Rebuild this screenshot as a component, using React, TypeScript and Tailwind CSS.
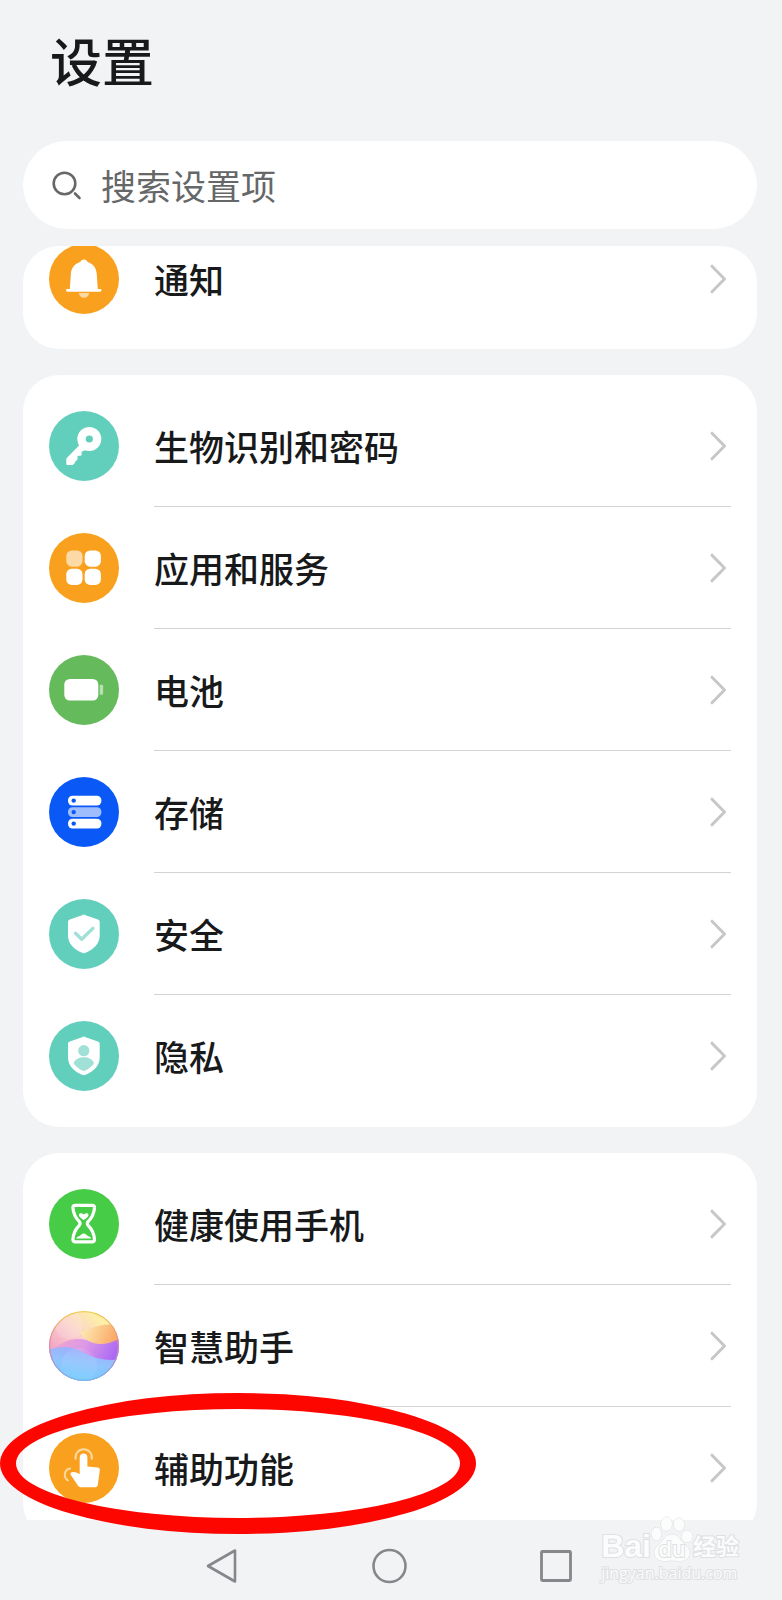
import type { ReactNode } from 'react'

type Item = {
  label: string
  icon: ReactNode
}

function Badge({ color, children }: { color: string; children: ReactNode }) {
  return (
    <svg viewBox="0 0 70 70" className="size-[70px] shrink-0" aria-hidden="true">
      <circle cx="35" cy="35" r="35" fill={color} />
      {children}
    </svg>
  )
}

const SHIELD =
  'M34.8 15.6c.7 0 1.2.3 1.8.6l12.3 4.4c1.2.4 1.8 1.2 1.8 2.4v13.5c0 8.5-6.4 14-13.6 17.1-1.6.7-3 .7-4.6 0C25.4 50.5 19 45 19 36.5V23c0-1.2.6-2 1.8-2.4l12.2-4.4c.6-.3 1.1-.6 1.8-.6z'

const bell = (
  <Badge color="#f9a11f">
    <path
      d="M35 15.6c1.8 0 3 1 3.5 2.3 5.5 1.6 8.7 5.8 9.2 11.6l1.1 15.5h2.4c.8 0 1.2.5 1.2 1.2v.4c0 .7-.4 1.1-1.2 1.1H18.3c-.8 0-1.2-.4-1.2-1.1v-.4c0-.7.4-1.2 1.2-1.2h2.5l1.1-15.5c.5-5.8 3.9-10 9.4-11.6.5-1.3 1.9-2.3 3.7-2.3z"
      fill="#fff"
    />
    <path d="M29.8 49h10.4c-.4 3-2.5 4.8-5.2 4.8S30.2 52 29.8 49z" fill="#fcd9a0" />
  </Badge>
)

const keyIcon = (
  <Badge color="#62cfbd">
    <circle cx="40.3" cy="28" r="7.8" fill="none" stroke="#fff" strokeWidth="8.4" />
    <path
      d="M31 33.5l5.8 5.5-3.2 1.2c-1.2.5-1.1 1.4-.9 2.5.2 1.5-.7 2.3-2.3 2.1-1.7-.1-2.3.8-1.9 2.2.4 1.6-.3 2.3-1.5 2.8-.8.4-.6 1.300-1.200 2.100l-1.600 1.600c-.4.4-.8.5-1.300.5h-4.300c-.8 0-1.300-.5-1.300-1.300v-4.400c0-.5.2-.9.5-1.200z"
      fill="#fff"
    />
  </Badge>
)

const apps = (
  <Badge color="#f9a11f">
    <rect x="17.3" y="17.5" width="16.2" height="16.2" rx="5.5" fill="#fcd9a5" />
    <rect x="35.7" y="17.5" width="16.2" height="16.2" rx="5.5" fill="#fff" />
    <rect x="17.3" y="35.7" width="16.2" height="16.2" rx="5.5" fill="#fff" />
    <rect x="35.7" y="35.7" width="16.2" height="16.2" rx="5.5" fill="#fff" />
  </Badge>
)

const battery = (
  <Badge color="#65bb5c">
    <rect x="15.3" y="24" width="34" height="21.6" rx="5.5" fill="#fff" />
    <rect x="50.7" y="29.8" width="3.4" height="10" rx="1.2" fill="#b9dfb5" />
  </Badge>
)

const storage = (
  <Badge color="#0a59f7">
    <rect x="19" y="18.7" width="33.4" height="9.8" rx="4.5" fill="#fff" />
    <rect x="19" y="30.2" width="33.4" height="9.8" rx="4.5" fill="#9dbdfc" />
    <rect x="19" y="41.7" width="33.4" height="9.8" rx="4.5" fill="#fff" />
    <g fill="#0a59f7">
      <circle cx="24.7" cy="23.6" r="2.2" />
      <circle cx="24.7" cy="35.1" r="2.2" />
      <circle cx="24.7" cy="46.6" r="2.2" />
    </g>
  </Badge>
)

const security = (
  <Badge color="#62cfbd">
    <path d={SHIELD} fill="#fff" />
    <path
      d="M26.5 34.2l6.2 6 11.2-10.8"
      fill="none"
      stroke="#a0e0d6"
      strokeWidth="3.4"
      strokeLinecap="round"
      strokeLinejoin="round"
    />
  </Badge>
)

const privacy = (
  <Badge color="#62cfbd">
    <path d={SHIELD} fill="#fff" />
    <circle cx="34.8" cy="29.7" r="5.6" fill="#a0e0d6" />
    <path
      d="M34.8 36.2c4.8 0 8.6 2 9.9 5.2.3.7.1 1.2-.4 1.8-2.1 2.6-5 4.9-8.1 6.4-1 .5-1.8.5-2.8 0-3.1-1.5-6-3.8-8.1-6.4-.5-.6-.7-1.1-.4-1.8 1.3-3.2 5.1-5.2 9.9-5.2z"
      fill="#a0e0d6"
    />
  </Badge>
)

const hourglass = (
  <Badge color="#47cc47">
    <path
      d="M26.2 16.3h17c1.5 0 2.4.9 2.3 2.3-.4 5.7-2.4 10-6.4 14-1 1.2-1 2.5 0 3.7 4 4 6 8.3 6.4 14 .1 1.5-.8 2.6-2.3 2.6h-17c-1.5 0-2.4-1.1-2.3-2.6.4-5.7 2.4-10 6.4-14 1-1.2 1-2.5 0-3.7-4-4-6-8.3-6.4-14-.1-1.4.8-2.3 2.3-2.3z"
      fill="none"
      stroke="#fff"
      strokeWidth="3.2"
    />
    <path d="M34.7 31c-2-1.4-4.8-3-4.8-5 0-2.2 3-2.2 4.8-.6 1.8-1.600 4.800-1.600 4.800.6 0 2-2.800 3.600-4.800 5z" fill="#fff" />
    <path d="M34.7 44.5c2 0 2.7 2 4.8 2.7 1.5.5 2.5 1.2 2.7 2.3H27.2c.2-1.100 1.200-1.800 2.700-2.300 2.100-.7 2.800-2.700 4.800-2.700z" fill="#fff" />
  </Badge>
)

const assistant = (
  <svg viewBox="0 0 70 70" className="size-[70px] shrink-0" aria-hidden="true">
    <defs>
      <clipPath id="orb">
        <circle cx="35" cy="35" r="35" />
      </clipPath>
      <linearGradient id="orbSky" x1="0.1" y1="0.55" x2="0.6" y2="0">
        <stop offset="0" stopColor="#f3a9c6" />
        <stop offset="0.5" stopColor="#fbd0cb" />
        <stop offset="1" stopColor="#fdf0a6" />
      </linearGradient>
      <linearGradient id="orbSun" x1="0" y1="0" x2="1" y2="0.2">
        <stop offset="0" stopColor="#fdf0b8" />
        <stop offset="1" stopColor="#faa968" />
      </linearGradient>
      <linearGradient id="orbWave" x1="0" y1="0" x2="1" y2="0.3">
        <stop offset="0" stopColor="#f3a5c8" />
        <stop offset="0.5" stopColor="#dc9ae6" />
        <stop offset="1" stopColor="#a866f6" />
      </linearGradient>
      <linearGradient id="orbSea" x1="0.7" y1="0" x2="0.4" y2="1">
        <stop offset="0" stopColor="#a3aafc" />
        <stop offset="0.5" stopColor="#90c4fd" />
        <stop offset="1" stopColor="#70cbfd" />
      </linearGradient>
      <linearGradient id="orbRim" x1="0" y1="0" x2="0" y2="1">
        <stop offset="0" stopColor="#f1ce52" />
        <stop offset="0.5" stopColor="#dd83a4" />
        <stop offset="1" stopColor="#74b5ef" />
      </linearGradient>
    </defs>
    <g clipPath="url(#orb)">
      <rect width="70" height="70" fill="url(#orbSky)" />
      <circle cx="20" cy="14" r="14" fill="#fff" opacity="0.15" />
      <path d="M0 40c8-3 14-12 30-12 10 0 14 6 40 0v42H0z" fill="url(#orbWave)" />
      <path d="M31 21c6-1 12-5 20-6.5 7-1.5 13-1.5 19 0V28c-6 3-12 5-19 5-9 0-16-5-20-12z" fill="url(#orbSun)" />
      <path d="M0 38.5c8-2.5 17-3.5 24-1.5 9 2.5 15 8 24 10 7 1.8 14 2.5 22 1.5V70H0z" fill="url(#orbSea)" />
      <circle cx="30" cy="55" r="18" fill="#fff" opacity="0.08" />
    </g>
    <circle cx="35" cy="35" r="34.4" fill="none" stroke="url(#orbRim)" strokeWidth="1.2" />
  </svg>
)

const touch = (
  <Badge color="#f9a11f">
    <path
      d="M34.6 20.6c2.2 0 3.8 1.6 3.8 3.8v9l10.2 1.2c1.6.2 2.4 1.2 2.2 2.8l-2 14.4c-.2 1.6-1.1 2.5-2.7 2.5H32.500c-1.400 0-2.500-.5-3.400-1.600l-7.300-10.800c-.8-1.200-.4-2.300.9-2.700 2.300-.6 5 .1 8 2V24.4c0-2.2 1.7-3.8 3.9-3.8z"
      fill="#fff"
    />
    <g fill="none" stroke="#fcd9a0" strokeWidth="2" strokeLinecap="round">
      <path d="M26.600 25.800a8.200 8.200 0 1 1 16.200 0" />
      <path d="M21 35.500c-6.500 1.500-6.500 9-2.200 11.800" />
    </g>
  </Badge>
)

const device: Item[] = [
  { label: '生物识别和密码', icon: keyIcon },
  { label: '应用和服务', icon: apps },
  { label: '电池', icon: battery },
  { label: '存储', icon: storage },
  { label: '安全', icon: security },
  { label: '隐私', icon: privacy },
]

const assist: Item[] = [
  { label: '健康使用手机', icon: hourglass },
  { label: '智慧助手', icon: assistant },
  { label: '辅助功能', icon: touch },
]

function Row({ label, icon }: Item) {
  return (
    <li className="group">
      <a href="#" className="flex h-[122px] items-center gap-[35px] pl-[26px]">
        {icon}
        <span className="mr-[26px] flex h-full flex-1 items-center justify-between border-b border-[#d2d3d4] pr-1 group-last:border-transparent">
          <span className="text-[35px] leading-[48px] font-medium text-[#18191a]">{label}</span>
          <svg viewBox="0 0 18 30" className="h-[30px] w-[18px]" fill="none" aria-hidden="true">
            <path d="M3 2.2L15.5 15 3 27.8" stroke="#c6c7c8" strokeWidth="3" strokeLinecap="round" strokeLinejoin="round" />
          </svg>
        </span>
      </a>
    </li>
  )
}

function Watermark() {
  return (
    <div className="pointer-events-none absolute right-[43px] bottom-4 flex flex-col font-['Open_Sans','Noto_Sans_CJK_SC',sans-serif] text-[#fbfcfc] [paint-order:stroke_fill] [-webkit-text-stroke:2px_#dfe0e2]">
      <div className="flex items-end">
        <span className="font-['Liberation_Sans',sans-serif] text-[32px] leading-[32px] font-bold">Bai</span>
        <span className="relative">
          <svg viewBox="0 0 42 46" className="h-[46px] w-[42px]" fill="#fbfcfc" stroke="#dcdddf" aria-hidden="true">
            <ellipse cx="5.5" cy="18" rx="5" ry="6.5" />
            <ellipse cx="15.5" cy="8" rx="5.5" ry="7" />
            <ellipse cx="28" cy="8.5" rx="5.5" ry="6.5" />
            <ellipse cx="36" cy="20.5" rx="5.5" ry="6" />
            <path d="M21 18.5c6 0 8 5 12 9s7 7 5 12c-2 6-9 6-17 5-8 1-15 1-17-5-2-5 1-8 5-12s6-9 12-9z" />
          </svg>
          <span className="absolute inset-x-0 bottom-0 text-center text-[22px] leading-[28px] font-semibold">du</span>
        </span>
        <span className="text-[23px] leading-[32px] font-bold">经验</span>
      </div>
      <span className="text-[16px] leading-[22px]">jingyan.baidu.com</span>
    </div>
  )
}

export default function App() {
  return (
    <div className="flex h-screen flex-col overflow-hidden bg-[#f1f3f5] font-['Noto_Sans_CJK_SC',sans-serif]">
      <header className="pr-[25px] pl-[23px]">
        <h1 className="pt-5 pl-[27px] text-[52px] leading-[80px] font-medium text-[#18191a]">设置</h1>
        <label className="mt-[41px] flex h-[88px] items-center gap-[18px] rounded-full bg-white px-7">
          <svg viewBox="0 0 32 32" className="size-8 shrink-0" fill="none" stroke="#666768" strokeWidth="2.6" strokeLinecap="round" aria-hidden="true">
            <circle cx="13.5" cy="14.5" r="10.8" />
            <path d="M24 24.5l4.5 4.5" />
          </svg>
          <input
            type="search"
            aria-label="搜索设置项"
            placeholder="搜索设置项"
            className="min-w-0 flex-1 bg-transparent text-[35px] leading-[48px] text-[#18191a] outline-none placeholder:text-[#666768]"
          />
        </label>
      </header>

      <main className="mt-[17px] flex min-h-0 flex-1 flex-col gap-[26px] overflow-hidden pr-[25px] pl-[23px]">
        {/* first card is partly scrolled under the search bar */}
        <div className="shrink-0 overflow-hidden rounded-[36px] bg-white pb-[9px]">
          <ul className="-mt-7">
            <Row label="通知" icon={bell} />
          </ul>
        </div>
        <ul className="shrink-0 rounded-[36px] bg-white py-[10px]">
          {device.map((item) => (
            <Row key={item.label} {...item} />
          ))}
        </ul>
        <ul className="shrink-0 rounded-[36px] bg-white py-[10px]">
          {assist.map((item) => (
            <Row key={item.label} {...item} />
          ))}
        </ul>
      </main>

      <nav className="relative flex h-20 shrink-0 items-center justify-center gap-[130px] pt-3 pr-1">
        <div className="pointer-events-none absolute -top-[127px] left-0 h-[141px] w-[476px] rounded-[50%] border-[16px] border-[#fe0600]" />
        <button type="button" aria-label="返回">
          <svg viewBox="0 0 36 36" className="size-9" fill="none" stroke="#85878a" strokeWidth="2.6" strokeLinejoin="round">
            <path d="M30 2.5v31L3 18z" />
          </svg>
        </button>
        <button type="button" aria-label="主屏幕">
          <svg viewBox="0 0 36 36" className="size-9" fill="none" stroke="#85878a" strokeWidth="2.6">
            <circle cx="18.5" cy="18" r="16" />
          </svg>
        </button>
        <button type="button" aria-label="最近任务">
          <svg viewBox="0 0 36 36" className="size-9" fill="none" stroke="#85878a" strokeWidth="2.8">
            <rect x="4.5" y="3.5" width="29" height="29" rx="1" />
          </svg>
        </button>
        <Watermark />
      </nav>
    </div>
  )
}
